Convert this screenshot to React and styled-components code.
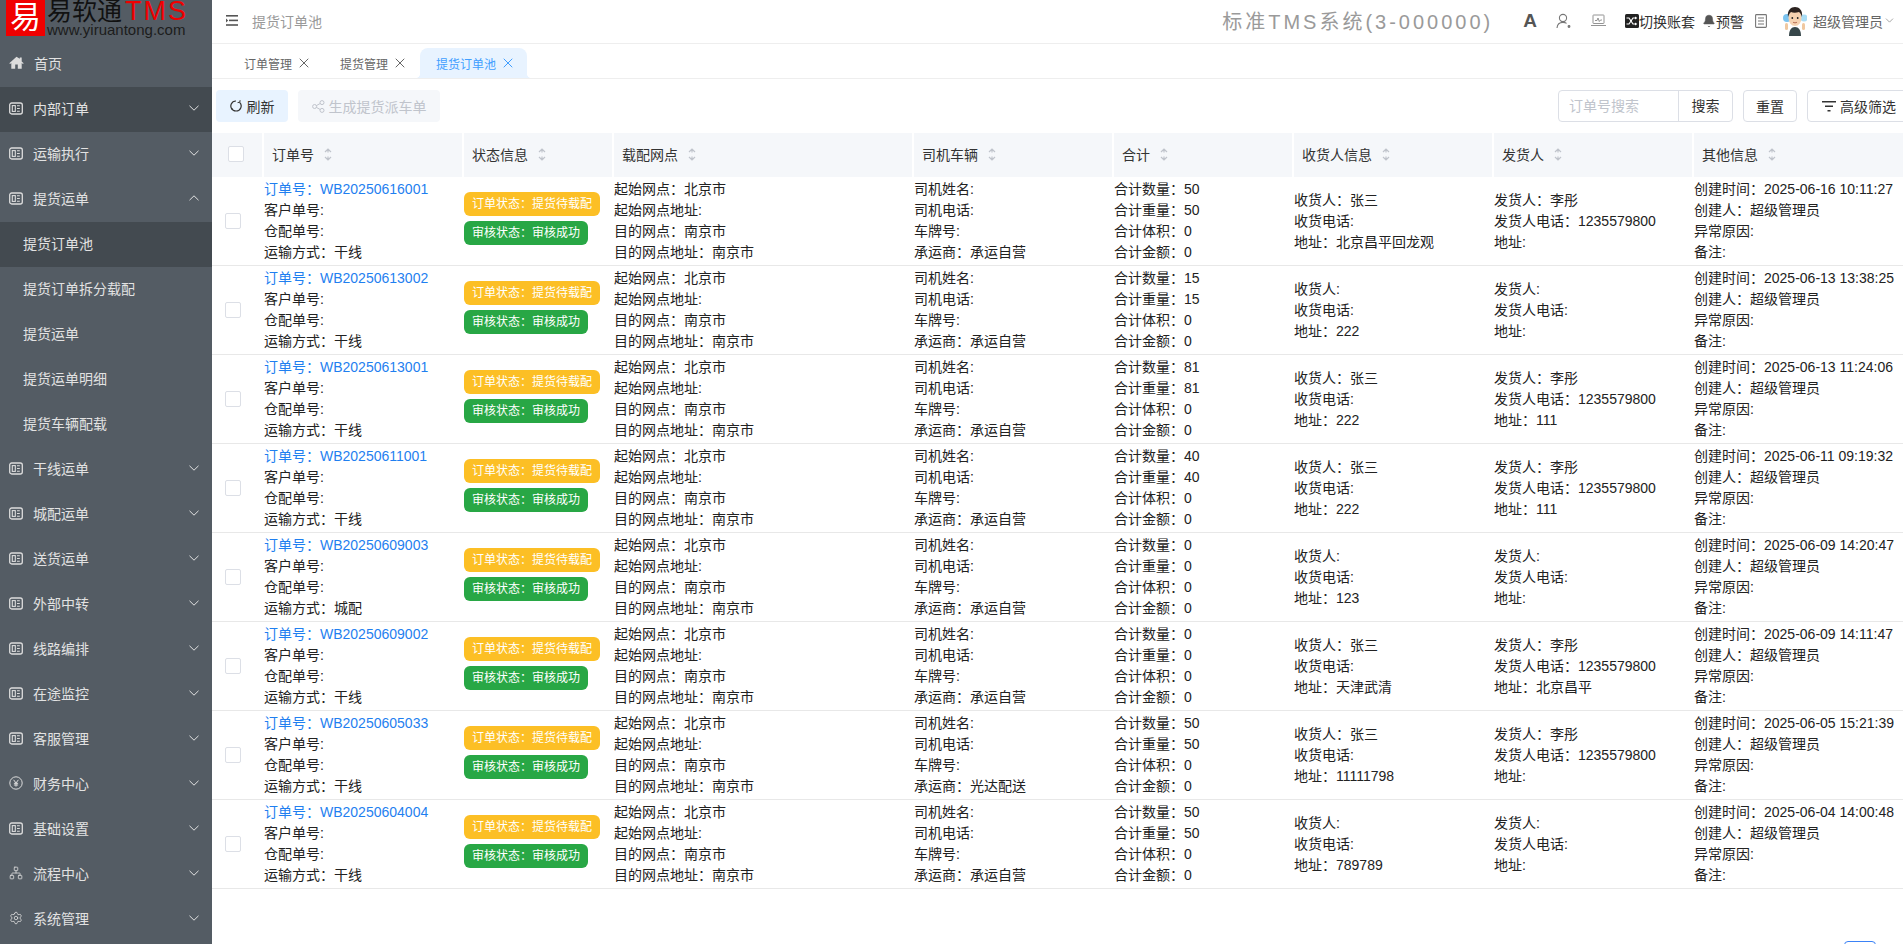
import React from "react";
import styled, { createGlobalStyle } from "styled-components";
import { ChevronDown, ChevronUp, X, Settings, Network, Bell } from "lucide-react";

const FONT = `"Liberation Sans", "Noto Sans CJK SC", sans-serif`;

const Global = createGlobalStyle`
  html, body { margin: 0; padding: 0; height: 944px; overflow: hidden; background: #fff; }
  body { font-family: ${FONT}; font-size: 14px; color: #222; }
  * { box-sizing: border-box; }
`;

const Shell = styled.div`
  display: flex;
  width: 1903px;
  height: 944px;
  overflow: hidden;
`;

/* ---------- sidebar ---------- */
const Sidebar = styled.aside`
  flex: 0 0 212px;
  height: 944px;
  background: #545c64;
  overflow: hidden;
`;
const Logo = styled.div`
  display: flex;
  height: 42px;
  padding-left: 6px;
  overflow: hidden;
`;
const LogoMark = styled.div`
  flex: 0 0 39px;
  height: 36px;
  background: #f00000;
  color: #fff;
  font-size: 31px;
  line-height: 35px;
  font-weight: 400;
  text-align: center;
  overflow: hidden;
`;
const LogoText = styled.div`
  margin-left: 2px;
  display: flex;
  flex-direction: column;
`;
const LogoTop = styled.div`
  display: flex;
  align-items: center;
  height: 23px;
`;
const LogoName = styled.span`
  font-size: 25px;
  line-height: 23px;
  color: #111;
`;
const LogoTms = styled.span`
  margin-left: 3px;
  font-size: 27px;
  line-height: 23px;
  letter-spacing: 2px;
  color: #f00000;
`;
const LogoUrl = styled.div`
  font-size: 15px;
  line-height: 14px;
  color: #1c1c1c;
`;
const MenuItem = styled.div`
  display: flex;
  align-items: center;
  height: 45px;
  padding: 0 13px 3px ${(p) => (p.$sub ? "23px" : "9px")};
  background: ${(p) => (p.$active ? "#434a50" : "transparent")};
  color: #e2e2e2;
  font-size: 14px;
`;
const MenuIcon = styled.span`
  display: flex;
  justify-content: center;
  flex: 0 0 14px;
  margin-right: 10px;
  color: #dcdcdc;
`;
const MenuLabel = styled.span`
  flex: 1;
`;
const MenuArrow = styled.span`
  display: flex;
  width: 10px;
  justify-content: center;
  overflow: visible;
`;

const TableIcon = () => (
  <svg width="14" height="13" viewBox="0 0 14 13" fill="none" stroke="currentColor" strokeWidth="1.3">
    <rect x="0.7" y="1" width="12.6" height="11" rx="2" />
    <rect x="3.3" y="3.6" width="3" height="5.8" strokeWidth="1.1" />
    <path d="M8 3.8h2.8M8 6.5h2.8M8 9.2h2.8" strokeWidth="1.1" />
  </svg>
);
const HomeIcon = () => (
  <svg width="15" height="14" viewBox="0 0 15 14" fill="currentColor">
    <path d="M7.5 0.8 0.3 7.2l.8.9 1.2-1v5.6h3.9V8.6h2.6v4.1h3.9V7.1l1.2 1 .8-.9-2-1.8V1.6h-1.9v1.2z" />
  </svg>
);
const YenIcon = () => (
  <svg width="14" height="14" viewBox="0 0 14 14" fill="none" stroke="currentColor" strokeWidth="1">
    <circle cx="7" cy="7" r="6.2" />
    <path d="M4.6 3.8 7 7l2.4-3.2M7 7v3.6M4.9 7.3h4.2M4.9 9h4.2" />
  </svg>
);
const ArrowSvg = ({ up }) => (
  <svg width="10" height="6" viewBox="0 0 10 6" fill="none" stroke="#e2e2e2" strokeWidth="1">
    <path d={up ? "M0.5 5.2 5 0.8l4.5 4.4" : "M0.5 0.8 5 5.2l4.5-4.4"} />
  </svg>
);

const menu = [
  { label: "首页", icon: <HomeIcon /> },
  { label: "内部订单", icon: <TableIcon />, arrow: "down", active: true },
  { label: "运输执行", icon: <TableIcon />, arrow: "down" },
  { label: "提货运单", icon: <TableIcon />, arrow: "up" },
  { label: "提货订单池", sub: true, active: true },
  { label: "提货订单拆分载配", sub: true },
  { label: "提货运单", sub: true },
  { label: "提货运单明细", sub: true },
  { label: "提货车辆配载", sub: true },
  { label: "干线运单", icon: <TableIcon />, arrow: "down" },
  { label: "城配运单", icon: <TableIcon />, arrow: "down" },
  { label: "送货运单", icon: <TableIcon />, arrow: "down" },
  { label: "外部中转", icon: <TableIcon />, arrow: "down" },
  { label: "线路编排", icon: <TableIcon />, arrow: "down" },
  { label: "在途监控", icon: <TableIcon />, arrow: "down" },
  { label: "客服管理", icon: <TableIcon />, arrow: "down" },
  { label: "财务中心", icon: <YenIcon />, arrow: "down" },
  { label: "基础设置", icon: <TableIcon />, arrow: "down" },
  { label: "流程中心", icon: <Network size={14} strokeWidth={1.4} />, arrow: "down" },
  { label: "系统管理", icon: <Settings size={14} strokeWidth={1.4} />, arrow: "down" },
];

/* ---------- main ---------- */
const Main = styled.main`
  flex: 0 0 1691px;
  display: flex;
  flex-direction: column;
  height: 944px;
  overflow: hidden;
`;
const Header = styled.header`
  flex: 0 0 44px;
  display: flex;
  align-items: center;
  padding: 0 7px 2px 14px;
  border-bottom: 1px solid #eeeeee;
`;
const Crumb = styled.span`
  margin-left: 14px;
  flex: 1;
  color: #999;
  font-size: 14px;
`;
const SystemName = styled.span`
  font-size: 20px;
  letter-spacing: 3px;
  color: #9a9a9a;
  margin-right: 30px;
`;
const HeadIcon = styled.span`
  display: flex;
  align-items: center;
  color: ${(p) => p.$color || "#777"};
  margin-right: ${(p) => p.$mr || 0}px;
`;
const HeadText = styled.span`
  font-size: 14px;
  color: ${(p) => p.$color || "#333"};
  margin-right: ${(p) => p.$mr || 0}px;
`;
const FontA = styled.span`
  font-size: 19px;
  font-weight: 700;
  color: #555;
  margin-right: 19px;
  line-height: 20px;
`;

const TabsBar = styled.nav`
  flex: 0 0 35px;
  display: flex;
  align-items: flex-end;
  padding-left: 14px;
  border-bottom: 1px solid #eeeeee;
`;
const Tab = styled.div`
  position: relative;
  display: flex;
  align-items: center;
  gap: 8px;
  height: 30px;
  padding: ${(p) => (p.$active ? "0 15px 0 16px" : "0 14px 0 18px")};
  margin-left: ${(p) => (p.$active ? "2px" : "0")};
  font-size: 12px;
  color: ${(p) => (p.$active ? "#409eff" : "#666")};
  background: ${(p) => (p.$active ? "#e8f3ff" : "transparent")};
  border-radius: 8px 8px 0 0;
  ${(p) =>
    p.$active &&
    `
    &::before, &::after {
      content: "";
      position: absolute;
      bottom: 0;
      width: 5px;
      height: 5px;
    }
    &::before { left: -5px; background: radial-gradient(circle at 0 0, transparent 5px, #e8f3ff 5.5px); }
    &::after { right: -5px; background: radial-gradient(circle at 100% 0, transparent 5px, #e8f3ff 5.5px); }
  `}
`;
const TabClose = styled(X)`
  margin: 0 -4px;
`;

const Toolbar = styled.div`
  flex: 0 0 54px;
  display: flex;
  justify-content: space-between;
  align-items: flex-start;
  padding: 11px 0 0 4px;
`;
const ToolGroup = styled.div`
  display: flex;
  gap: 10px;
  margin-right: ${(p) => p.$mr || 0}px;
`;
const ToolButton = styled.button`
  flex: 0 0 auto;
  display: flex;
  align-items: center;
  justify-content: center;
  gap: ${(p) => p.$gap || 4}px;
  height: 32px;
  width: ${(p) => p.$w}px;
  padding: 0;
  font: 14px ${FONT};
  color: ${(p) => (p.$disabled ? "#c0c4cc" : "#333")};
  background: ${(p) => (p.$primary ? "#e8f3ff" : p.$disabled ? "#f5f7fa" : "#fff")};
  border: 1px solid ${(p) => (p.$plain ? "#dcdfe6" : "transparent")};
  border-radius: 4px;
`;
const SearchBox = styled.div`
  display: flex;
  flex: 0 0 175px;
  height: 32px;
  border: 1px solid #dcdfe6;
  border-radius: 4px;
`;
const SearchInput = styled.div`
  flex: 0 0 120px;
  padding-left: 10px;
  line-height: 30px;
  color: #c0c4cc;
  border-right: 1px solid #dcdfe6;
`;
const SearchBtn = styled.div`
  flex: 1;
  text-align: center;
  line-height: 30px;
  color: #333;
`;

const Table = styled.table`
  flex: 0 0 auto;
  width: 1691px;
  table-layout: fixed;
  border-collapse: separate;
  border-spacing: 0;
`;
const Th = styled.th`
  height: 44px;
  padding: 0 0 2px ${(p) => (p.$first ? 0 : 8)}px;
  background: #f5f7fa;
  border-left: ${(p) => (p.$first ? "0" : "2px solid #fff")};
  font-weight: 400;
  font-size: 14px;
  color: #333;
  text-align: left;
`;
const ThInner = styled.div`
  display: flex;
  align-items: center;
  gap: 10px;
`;
const Td = styled.td`
  height: 89px;
  padding: ${(p) => p.$top || 0}px 0 ${(p) => p.$bottom || 0}px ${(p) => (p.$flush ? 0 : 2)}px;
  border-bottom: 1px solid #e8e8e8;
  vertical-align: middle;
`;
const Line = styled.div`
  font-size: 14px;
  line-height: 21px;
  white-space: nowrap;
  color: ${(p) => (p.$link ? "#1f7ff0" : "#222")};
`;
const Check = styled.span`
  display: block;
  width: 16px;
  height: 16px;
  margin-left: ${(p) => p.$ml}px;
  background: #fff;
  border: 1px solid #dcdfe6;
  border-radius: 2px;
`;
const Chip = styled.div`
  display: table;
  height: 24px;
  line-height: 24px;
  padding: 0 8px;
  border-radius: 6px;
  font-size: 12px;
  color: #fff;
  white-space: nowrap;
  background: ${(p) => p.$bg};
  & + & { margin-top: 5px; }
`;
const Pager = styled.div`
  flex: 0 0 auto;
  display: flex;
  justify-content: flex-end;
  padding: 52px 27px 0 0;
`;
const PageBtn = styled.div`
  width: 32px;
  height: 30px;
  border: 1px solid #3b82f6;
  border-radius: 4px;
`;

const SortIcon = () => (
  <svg width="8" height="13" viewBox="0 0 8 13" fill="none" stroke="#c0c4cc" strokeWidth="1.2">
    <path d="M1 4 4 1l3 3M4 1v3.5M1 9l3 3 3-3M4 12V8.5" />
  </svg>
);
const Fold = () => (
  <svg width="12" height="11" viewBox="0 0 12 11" fill="#555">
    <rect x="0" y="0" width="12" height="1.6" />
    <rect x="3" y="4.6" width="9" height="1.6" />
    <rect x="0" y="9.2" width="12" height="1.6" />
    <path d="M0 3.4v4L2.2 5.4z" />
  </svg>
);
const UserIcon = () => (
  <svg width="16" height="16" viewBox="0 0 16 16" fill="none" stroke="#777" strokeWidth="1.1">
    <circle cx="7" cy="5" r="3.6" />
    <path d="M1 15c.3-3.6 2.6-5.6 6-5.6 1.4 0 2.6.3 3.6 1" />
    <circle cx="13" cy="13.5" r="0.9" fill="#777" />
  </svg>
);
const MonitorIcon = () => (
  <svg width="15" height="13" viewBox="0 0 15 13" fill="none" stroke="#888" strokeWidth="0.9">
    <rect x="2" y="1" width="11" height="8.5" rx="0.6" />
    <path d="M0 11.5h15M4 6.5h2l1-2.5 1.3 3.5L9.5 6H11" />
  </svg>
);
const SwitchIcon = () => (
  <svg width="14" height="14" viewBox="0 0 14 14">
    <rect width="14" height="14" rx="1.5" fill="#222" />
    <path d="M1.5 4h2.5l4 6h2.5M1.5 10h2.5l4-6h2.5" fill="none" stroke="#fff" strokeWidth="1.2" />
    <path d="M10 2.4 12.4 4 10 5.6zM10 8.4 12.4 10 10 11.6z" fill="#fff" />
  </svg>
);
const DocIcon = () => (
  <svg width="12" height="14" viewBox="0 0 12 14" fill="none" stroke="#777" strokeWidth="1.1">
    <rect x="0.6" y="0.6" width="10.8" height="12.8" rx="0.8" />
    <path d="M3 4h6M3 7h6M3 10h6" />
  </svg>
);
const Avatar = () => (
  <svg width="24" height="30" viewBox="0 0 24 30">
    <circle cx="4" cy="12" r="4" fill="#7cc4f0" />
    <circle cx="21" cy="12" r="3.5" fill="#a8dcf5" />
    <path d="M6 30c0-6 2.5-9 6-9s6 3 6 9z" fill="#37474a" />
    <rect x="2" y="17" width="3" height="7" rx="1.5" fill="#f0c8a0" />
    <rect x="19" y="17" width="3" height="7" rx="1.5" fill="#f0c8a0" />
    <ellipse cx="12" cy="12" rx="6.5" ry="8" fill="#f6d2b0" />
    <path d="M5 11C4 4 8 1 12 1s8 3 7 10c-1-3-2-4-3-5-3 1-6 1-8 0-1 1-2 2-3 5z" fill="#2c2320" />
    <circle cx="9.3" cy="12" r="0.9" fill="#222" />
    <circle cx="14.7" cy="12" r="0.9" fill="#222" />
    <path d="M10 16.2c1 .8 3 .8 4 0" fill="none" stroke="#a5523a" strokeWidth="0.8" />
  </svg>
);
const RefreshIcon = () => (
  <svg width="12" height="12" viewBox="0 0 12 12" fill="none" stroke="#333" strokeWidth="1.2">
    <path d="M9.6 2.4A5 5 0 0 1 6 11a5 5 0 0 1-4.6-3" />
    <path d="M2.4 9.6A5 5 0 0 1 6 1" />
    <path d="M7.6 2.6 9.8 2.2 10.1 0.2" strokeWidth="1" />
  </svg>
);
const ShareIcon = () => (
  <svg width="13" height="13" viewBox="0 0 13 13" fill="none" stroke="#c0c4cc" strokeWidth="1">
    <circle cx="2.6" cy="6.5" r="2" />
    <circle cx="10" cy="2.6" r="2" />
    <circle cx="10" cy="10.4" r="2" />
    <path d="M4.4 5.6 8.2 3.5M4.4 7.4l3.8 2.1" />
  </svg>
);
const FilterIcon = () => (
  <svg width="14" height="11" viewBox="0 0 14 11" fill="#333">
    <rect x="0" y="0" width="14" height="1.5" />
    <rect x="3" y="4.5" width="8" height="1.5" />
    <rect x="5.5" y="9" width="3" height="1.5" />
  </svg>
);

const columns = [
  { w: 50 },
  { w: 200, t: "订单号" },
  { w: 150, t: "状态信息" },
  { w: 300, t: "载配网点" },
  { w: 200, t: "司机车辆" },
  { w: 180, t: "合计" },
  { w: 200, t: "收货人信息" },
  { w: 200, t: "发货人" },
  { w: 211, t: "其他信息" },
];

const rows = [
  { no: "WB20250616001", way: "干线", qty: 50, carrier: "承运自营", to: "张三", addr: "北京昌平回龙观", from: "李彤", tel: "1235579800", fromAddr: "", time: "2025-06-16 10:11:27" },
  { no: "WB20250613002", way: "干线", qty: 15, carrier: "承运自营", to: "", addr: "222", from: "", tel: "", fromAddr: "", time: "2025-06-13 13:38:25" },
  { no: "WB20250613001", way: "干线", qty: 81, carrier: "承运自营", to: "张三", addr: "222", from: "李彤", tel: "1235579800", fromAddr: "111", time: "2025-06-13 11:24:06" },
  { no: "WB20250611001", way: "干线", qty: 40, carrier: "承运自营", to: "张三", addr: "222", from: "李彤", tel: "1235579800", fromAddr: "111", time: "2025-06-11 09:19:32" },
  { no: "WB20250609003", way: "城配", qty: 0, carrier: "承运自营", to: "", addr: "123", from: "", tel: "", fromAddr: "", time: "2025-06-09 14:20:47" },
  { no: "WB20250609002", way: "干线", qty: 0, carrier: "承运自营", to: "张三", addr: "天津武清", from: "李彤", tel: "1235579800", fromAddr: "北京昌平", time: "2025-06-09 14:11:47" },
  { no: "WB20250605033", way: "干线", qty: 50, carrier: "光达配送", to: "张三", addr: "11111798", from: "李彤", tel: "1235579800", fromAddr: "", time: "2025-06-05 15:21:39" },
  { no: "WB20250604004", way: "干线", qty: 50, carrier: "承运自营", to: "", addr: "789789", from: "", tel: "", fromAddr: "", time: "2025-06-04 14:00:48" },
];

const kv = (k, v) => (v === "" ? `${k}:` : `${k}：${v}`);

export default function App() {
  return (
    <>
      <Global />
      <Shell>
        <Sidebar>
          <Logo>
            <LogoMark>易</LogoMark>
            <LogoText>
              <LogoTop>
                <LogoName>易软通</LogoName>
                <LogoTms>TMS</LogoTms>
              </LogoTop>
              <LogoUrl>www.yiruantong.com</LogoUrl>
            </LogoText>
          </Logo>
          {menu.map((m, i) => (
            <MenuItem key={i} $sub={m.sub} $active={m.active}>
              {m.icon && <MenuIcon>{m.icon}</MenuIcon>}
              <MenuLabel>{m.label}</MenuLabel>
              {m.arrow && <MenuArrow><ArrowSvg up={m.arrow === "up"} /></MenuArrow>}
            </MenuItem>
          ))}
        </Sidebar>
        <Main>
          <Header>
            <Fold />
            <Crumb>提货订单池</Crumb>
            <SystemName>标准TMS系统(3-000000)</SystemName>
            <FontA>A</FontA>
            <HeadIcon $mr={19}><UserIcon /></HeadIcon>
            <HeadIcon $mr={19}><MonitorIcon /></HeadIcon>
            <HeadIcon><SwitchIcon /></HeadIcon>
            <HeadText $mr={7}>切换账套</HeadText>
            <HeadIcon $color="#555"><Bell size={14} fill="#555" strokeWidth={1} /></HeadIcon>
            <HeadText $mr={11}>预警</HeadText>
            <HeadIcon $mr={16}><DocIcon /></HeadIcon>
            <HeadIcon $mr={6}><Avatar /></HeadIcon>
            <HeadText $color="#666">超级管理员</HeadText>
            <ChevronDown size={13} strokeWidth={1.2} color="#777" />
          </Header>
          <TabsBar>
            <Tab>订单管理<TabClose size={16} strokeWidth={1.5} /></Tab>
            <Tab>提货管理<TabClose size={16} strokeWidth={1.5} /></Tab>
            <Tab $active>提货订单池<TabClose size={16} strokeWidth={1.5} /></Tab>
          </TabsBar>
          <Toolbar>
            <ToolGroup>
              <ToolButton $primary $w={72} $gap={5}><RefreshIcon />刷新</ToolButton>
              <ToolButton $disabled $w={142}><ShareIcon />生成提货派车单</ToolButton>
            </ToolGroup>
            <ToolGroup $mr={-8}>
              <SearchBox>
                <SearchInput>订单号搜索</SearchInput>
                <SearchBtn>搜索</SearchBtn>
              </SearchBox>
              <ToolButton $plain $w={54}>重置</ToolButton>
              <ToolButton $plain $w={104} $gap={4}><FilterIcon />高级筛选</ToolButton>
            </ToolGroup>
          </Toolbar>
          <Table>
            <colgroup>
              {columns.map((c, i) => <col key={i} style={{ width: c.w }} />)}
            </colgroup>
            <thead>
              <tr>
                <Th $first><Check $ml={16} /></Th>
                {columns.slice(1).map((c) => (
                  <Th key={c.t}>
                    <ThInner>{c.t}<SortIcon /></ThInner>
                  </Th>
                ))}
              </tr>
            </thead>
            <tbody>
              {rows.map((r) => (
                <tr key={r.no}>
                  <Td $flush><Check $ml={13} /></Td>
                  <Td>
                    <Line $link>订单号：{r.no}</Line>
                    <Line>客户单号:</Line>
                    <Line>仓配单号:</Line>
                    <Line>运输方式：{r.way}</Line>
                  </Td>
                  <Td $bottom={5}>
                    <Chip $bg="#fcbf25">订单状态：提货待载配</Chip>
                    <Chip $bg="#28a745">审核状态：审核成功</Chip>
                  </Td>
                  <Td>
                    <Line>起始网点：北京市</Line>
                    <Line>起始网点地址:</Line>
                    <Line>目的网点：南京市</Line>
                    <Line>目的网点地址：南京市</Line>
                  </Td>
                  <Td>
                    <Line>司机姓名:</Line>
                    <Line>司机电话:</Line>
                    <Line>车牌号:</Line>
                    <Line>承运商：{r.carrier}</Line>
                  </Td>
                  <Td>
                    <Line>合计数量：{r.qty}</Line>
                    <Line>合计重量：{r.qty}</Line>
                    <Line>合计体积：0</Line>
                    <Line>合计金额：0</Line>
                  </Td>
                  <Td $top={1}>
                    <Line>{kv("收货人", r.to)}</Line>
                    <Line>收货电话:</Line>
                    <Line>{kv("地址", r.addr)}</Line>
                  </Td>
                  <Td $top={1}>
                    <Line>{kv("发货人", r.from)}</Line>
                    <Line>{kv("发货人电话", r.tel)}</Line>
                    <Line>{kv("地址", r.fromAddr)}</Line>
                  </Td>
                  <Td>
                    <Line>创建时间：{r.time}</Line>
                    <Line>创建人：超级管理员</Line>
                    <Line>异常原因:</Line>
                    <Line>备注:</Line>
                  </Td>
                </tr>
              ))}
            </tbody>
          </Table>
          <Pager><PageBtn /></Pager>
        </Main>
      </Shell>
    </>
  );
}
